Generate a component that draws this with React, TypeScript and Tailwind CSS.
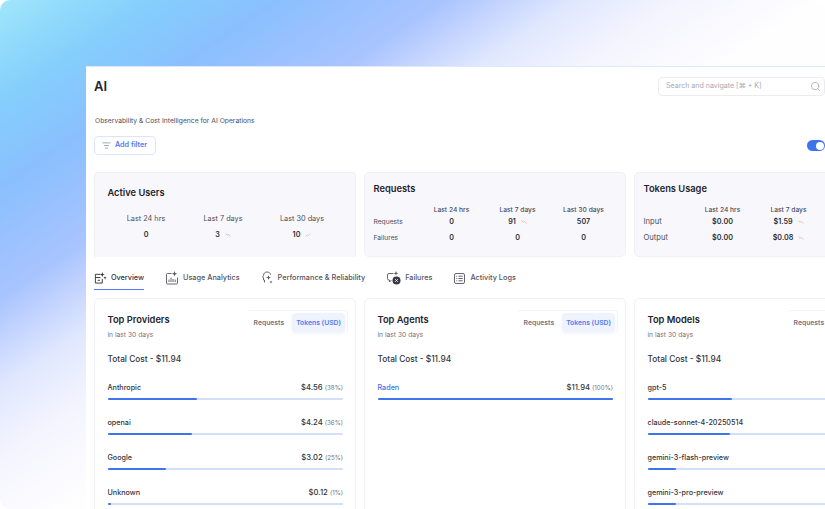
import React from 'react';
import { ListFilter, Search } from 'lucide-react';

const Trend = ({ up }: { up?: boolean }) => (
  <svg width="6" height="4" viewBox="0 0 8 5" fill="none" className={up ? 'text-[#a9d6bd]' : 'text-[#f2a79b]'}>
    {up ? (
      <path d="M0.5 4.2 L3 2.4 L4.5 3.2 L7.5 0.8" stroke="currentColor" strokeWidth="1" />
    ) : (
      <path d="M0.5 0.8 L3 2.6 L4.5 1.8 L7.5 4.2" stroke="currentColor" strokeWidth="1" />
    )}
  </svg>
);

const Value = ({ text, trend }: { text: string; trend?: 'up' | 'down' }) => (
  <span className="flex items-center justify-center gap-[5px] text-[7.2px] font-semibold text-[#2c2c34]">
    {text}
    {trend && <Trend up={trend === 'up'} />}
  </span>
);

const OverviewIcon = () => (
  <svg width="14" height="14" viewBox="0 0 14 14" fill="none" stroke="#30303a" strokeWidth="1">
    <path d="M7 3H1.5V12.5H9V8" />
    <path d="M1.5 6.5H7M4 9.5H6.5" />
    <path d="M9 0.5L9.7 2.6L11.7 3.2L9.7 3.9L9 6L8.3 3.9L6.6 3.2L8.3 2.6Z" fill="#30303a" stroke="none" />
    <path d="M12 5L12.5 6.3L13.6 6.8L12.5 7.2L12 9L11.5 7.2L10.4 6.8L11.5 6.3Z" fill="#30303a" stroke="none" />
  </svg>
);

const UsageIcon = () => (
  <svg width="12" height="14" viewBox="0 0 12 14" fill="none" stroke="#555560" strokeWidth="0.9">
    <path d="M5.5 2.5H1.5A1 1 0 0 0 0.5 3.5V12A1 1 0 0 0 1.5 13H10.5A1 1 0 0 0 11.5 12V6.5" />
    <path d="M3 11V8.5M5 11V6.5M7 11V8M9.2 11V8.5" />
    <path d="M8.5 0L9.2 2.1L11.3 2.7L9.2 3.4L8.5 5.5L7.8 3.4L5.8 2.7L7.8 2.1Z" fill="#555560" stroke="none" />
  </svg>
);

const PerfIcon = () => (
  <svg width="11" height="14" viewBox="0 0 11 14" fill="none" stroke="#555560" strokeWidth="0.9">
    <path d="M2.5 11.5V9H1.5V7L0.6 6L1.5 4.5C1.5 2.2 3 1 5 1C7 1 8.3 2 8.7 3.6" />
    <path d="M6.5 4.2L7.1 6L9 6.6L7.1 7.2L6.5 9L5.9 7.2L4 6.6L5.9 6Z" fill="#555560" stroke="none" />
    <path d="M9 9.5L9.4 10.6L10.5 11L9.4 11.4L9 12.5L8.6 11.4L7.5 11L8.6 10.6Z" fill="#555560" stroke="none" />
  </svg>
);

const FailIcon = () => (
  <svg width="14" height="14" viewBox="0 0 14 14" fill="none" stroke="#555560" strokeWidth="0.9">
    <path d="M6.5 2.5H2A1.5 1.5 0 0 0 0.5 4V7.5A1.5 1.5 0 0 0 2 9H2.5V11L4.5 9" />
    <path d="M9 0L9.6 1.7L11.3 2.3L9.6 2.9L9 4.6L8.4 2.9L6.7 2.3L8.4 1.7Z" fill="#555560" stroke="none" />
    <circle cx="9.5" cy="9.5" r="4" fill="#3a3a44" stroke="none" />
    <path d="M8.2 8.2L10.8 10.8M10.8 8.2L8.2 10.8" stroke="#ffffff" />
  </svg>
);

const LogsIcon = () => (
  <svg width="11" height="11" viewBox="0 0 11 11" fill="none" stroke="#555560" strokeWidth="0.9">
    <rect x="0.5" y="0.5" width="10" height="10" rx="1.5" />
    <path d="M2.3 3.2H3.2M4.5 3.2H8.7M2.3 5.5H3.2M4.5 5.5H8.7M2.3 7.8H3.2M4.5 7.8H8.7" />
  </svg>
);

const tabs = [
  { label: 'Overview', icon: <OverviewIcon />, active: true, cls: 'w-[50px] gap-[4px]' },
  { label: 'Usage Analytics', icon: <UsageIcon />, cls: 'gap-[5px]' },
  { label: 'Performance & Reliability', icon: <PerfIcon />, cls: 'gap-[5px]' },
  { label: 'Failures', icon: <FailIcon />, cls: 'gap-[4px]' },
  { label: 'Activity Logs', icon: <LogsIcon />, cls: 'gap-[5px]' },
];

type Row = { name: string; cost?: string; pct?: string; fill: string; link?: boolean };

const providers: Row[] = [
  { name: 'Anthropic', cost: '$4.56', pct: '(38%)', fill: 'w-[38%]' },
  { name: 'openai', cost: '$4.24', pct: '(36%)', fill: 'w-[36%]' },
  { name: 'Google', cost: '$3.02', pct: '(25%)', fill: 'w-[25%]' },
  { name: 'Unknown', cost: '$0.12', pct: '(1%)', fill: 'w-[1.3%]' },
];

const agents: Row[] = [{ name: 'Raden', cost: '$11.94', pct: '(100%)', fill: 'w-full', link: true }];

const models: Row[] = [
  { name: 'gpt-5', fill: 'w-[36%]' },
  { name: 'claude-sonnet-4-20250514', fill: 'w-[35%]' },
  { name: 'gemini-3-flash-preview', fill: 'w-[12%]' },
  { name: 'gemini-3-pro-preview', fill: 'w-[12%]' },
];

const TopCard = ({ title, rows }: { title: string; rows: Row[] }) => (
  <div className="h-[230px] w-[262px] shrink-0 rounded-[5px] border border-[#f0f0f5] bg-white pl-[12.5px] pr-[12px] pt-[11px]">
    <div className="flex items-start justify-between">
      <div className="pt-[3px]">
        <div className="text-[9.3px] leading-[14px] font-semibold text-[#24242c]">{title}</div>
        <div className="mt-[3px] text-[6.7px] leading-[10px] text-[#74747e]">in last 30 days</div>
      </div>
      <div className="mr-[-5px] flex items-center rounded-[4px] border-t border-r border-[#f4f4f8] p-[2px] text-[6.8px] leading-[19px] font-semibold whitespace-nowrap">
        <span className="pl-[5px] pr-[8px] text-[#74747e]">Requests</span>
        <span className="rounded-[4px] bg-[#eef3fe] px-[4px] text-[#4d7cf2] shadow-[0_2px_4px_#f0f4fe]">Tokens (USD)</span>
      </div>
    </div>
    <div className="mt-[12px] text-[8.3px] leading-[14px] font-medium text-[#33333b]">Total Cost - $11.94</div>
    <div className="mt-[16px] flex flex-col gap-[17px]">
      {rows.map((r) => (
        <div key={r.name}>
          <div className="flex items-center justify-between text-[7.2px] leading-[12px] font-medium text-[#33333b]">
            <span className={r.link ? 'text-[#3f6fe8]' : ''}>{r.name}</span>
            {r.cost && (
              <span className="text-[7.7px]">
                {r.cost} <span className="text-[6.2px] font-normal text-[#74747e]">{r.pct}</span>
              </span>
            )}
          </div>
          <div className="mt-[4px] h-[2px] rounded-full bg-[#d3e0fb]">
            <div className={`${r.fill} h-full rounded-full bg-[#3f74ee]`} />
          </div>
        </div>
      ))}
    </div>
  </div>
);

const App = () => {
  return (
    <div className="h-[509px] w-[825px] overflow-hidden rounded-l-[10px] rounded-tr-[10px] bg-[linear-gradient(146deg,#a0e6fb_0%,#84cffc_9.5%,#8abffe_17.6%,#a8c4fe_28%,#c4d4fe_32%,#e0e8fe_36.5%,#f4f4fe_43%,#fefeff_52%,#ffffff_100%)] pt-[66px] pl-[86px] font-['Inter','Liberation_Sans',sans-serif]">
      <div className="h-[443px] w-[739px] overflow-hidden border-t border-[#dfe9fd] bg-white pl-[8px]">
        <div className="flex items-start justify-between pt-[10px]">
          <h1 className="text-[13px] leading-[18px] font-semibold text-[#24242c]">AI</h1>
          <div className="flex h-[19px] w-[167px] items-center justify-between rounded-[4px] border border-[#ebebf1] pl-[7px] pr-[3px] text-[7.05px] text-[#a8a8b2]">
            Search and navigate [⌘ + K]
            <Search className="h-[11px] w-[11px] text-[#9a9aae]" strokeWidth={1.5} />
          </div>
        </div>
        <p className="mt-[20px] pl-[1px] text-[6.75px] leading-[10px] text-[#4e4e58]">Observability &amp; Cost Intelligence for AI Operations</p>
        <div className="mt-[10px] flex items-center justify-between">
          <button className="flex h-[19px] items-center gap-[4px] rounded-[4px] border border-[#dce6fb] pl-[7px] pr-[8px] text-[7.2px] font-semibold text-[#4d7cf2]">
            <ListFilter className="h-[9px] w-[9px] text-[#5a6a8a]" strokeWidth={1.5} />
            Add filter
          </button>
          <span className="flex h-[11px] w-[18px] items-center justify-end rounded-full bg-[#3f74ee] pr-[1px]">
            <span className="h-[8px] w-[8px] rounded-full bg-white" />
          </span>
        </div>

        <div className="mt-[17px] flex h-[85px] gap-[8px]">
          <div className="w-[262px] shrink-0 rounded-t-[4px] border border-b-0 border-[#f0f0f5] bg-[#f8f8fc] pl-[12.5px] pt-[13px]">
            <div className="text-[9.3px] leading-[14px] font-semibold text-[#24242c]">Active Users</div>
            <div className="mt-[13px] grid grid-cols-[77px_77px_81px] text-center text-[7.3px] leading-[12px] text-[#4e4e58]">
              <div>Last 24 hrs<div className="mt-[4px]"><Value text="0" /></div></div>
              <div>Last 7 days<div className="mt-[4px]"><Value text="3" trend="down" /></div></div>
              <div>Last 30 days<div className="mt-[4px]"><Value text="10" trend="up" /></div></div>
            </div>
          </div>

          <div className="w-[262px] shrink-0 rounded-[5px] border border-[#f0f0f5] bg-[#f8f8fc] pl-[8.5px] pt-[9px]">
            <div className="text-[9.3px] leading-[14px] font-semibold text-[#24242c]">Requests</div>
            <div className="mt-[10px] grid grid-cols-[45px_66px_66px_66px] grid-rows-[8px_16px_16px] items-center text-center text-[6.7px] leading-[12px]">
              <span />
              <span className="font-medium text-[#4e4e58]">Last 24 hrs</span>
              <span className="font-medium text-[#4e4e58]">Last 7 days</span>
              <span className="font-medium text-[#4e4e58]">Last 30 days</span>
              <span className="text-left text-[#4e4e58]">Requests</span>
              <Value text="0" />
              <Value text="91" trend="down" />
              <Value text="507" />
              <span className="text-left text-[#4e4e58]">Failures</span>
              <Value text="0" />
              <Value text="0" />
              <Value text="0" />
            </div>
          </div>

          <div className="w-[262px] shrink-0 rounded-[5px] border border-[#f0f0f5] bg-[#f8f8fc] pl-[8.5px] pt-[9px]">
            <div className="text-[9.3px] leading-[14px] font-semibold text-[#24242c]">Tokens Usage</div>
            <div className="mt-[10px] grid grid-cols-[46px_66px_66px] grid-rows-[8px_16px_16px] items-center text-center text-[6.7px] leading-[12px]">
              <span />
              <span className="font-medium text-[#4e4e58]">Last 24 hrs</span>
              <span className="font-medium text-[#4e4e58]">Last 7 days</span>
              <span className="text-left text-[7.6px] text-[#4e4e58]">Input</span>
              <Value text="$0.00" />
              <Value text="$1.59" trend="down" />
              <span className="text-left text-[7.6px] text-[#4e4e58]">Output</span>
              <Value text="$0.00" />
              <Value text="$0.08" trend="down" />
            </div>
          </div>
        </div>

        <div className="mt-[10px] flex h-[23px] gap-[22px]">
          {tabs.map((t) => (
            <div key={t.label} className={`flex h-[23px] items-center ${t.cls} border-b whitespace-nowrap text-[7.3px] font-medium ${t.active ? 'border-[#4d7cf2] text-[#30303a]' : 'border-transparent text-[#55555f]'}`}>
              {t.icon}
              {t.label}
            </div>
          ))}
        </div>

        <div className="mt-[8px] flex gap-[8px]">
          <TopCard title="Top Providers" rows={providers} />
          <TopCard title="Top Agents" rows={agents} />
          <TopCard title="Top Models" rows={models} />
        </div>
      </div>
    </div>
  );
};

export default App;
